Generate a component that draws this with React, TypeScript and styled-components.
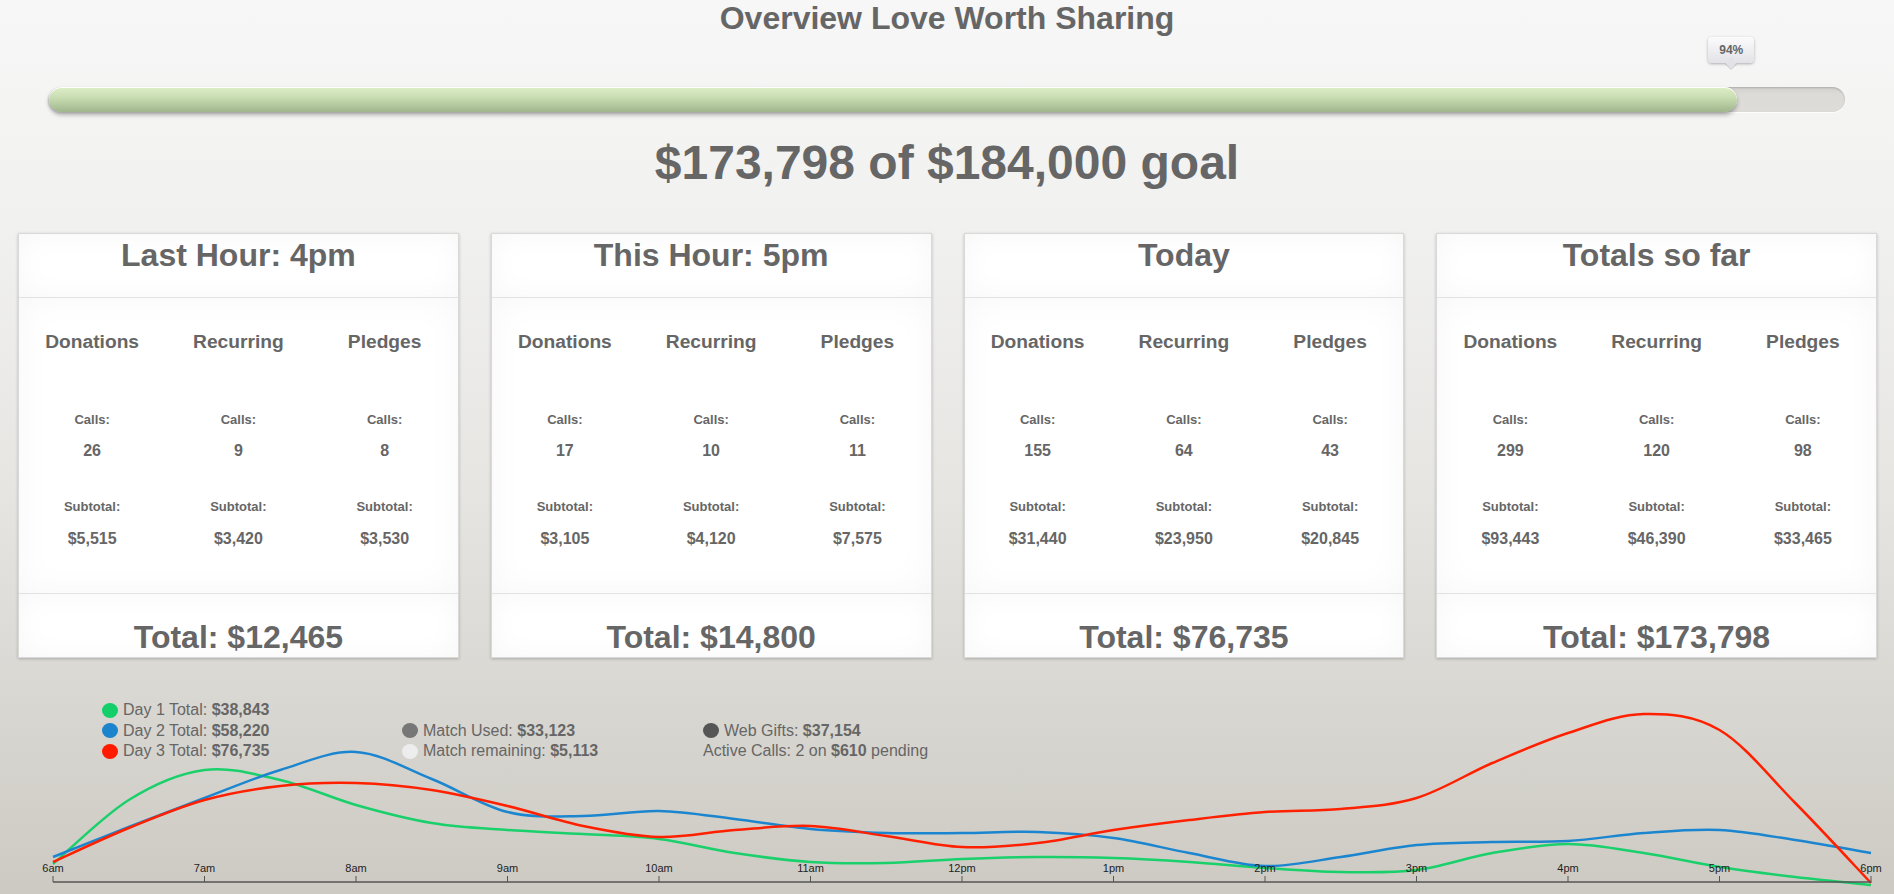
import React from 'react';
import styled, { createGlobalStyle } from 'styled-components';

const GlobalStyle = createGlobalStyle`
  html, body { margin: 0; padding: 0; overflow: hidden; }
  body {
    font-family: "Liberation Sans", Arial, Helvetica, sans-serif;
    color: #666;
  }
  * { box-sizing: border-box; }
`;

const Page = styled.div`
  width: 100%;
  height: 894px;
  display: flex;
  flex-direction: column;
  background: linear-gradient(180deg, #f7f7f7 0%, #f1f1f0 25%, #e6e5e2 55%, #dbd9d4 75%, #cdcac3 100%);
  overflow: hidden;
`;

const Title = styled.h1`
  margin: 0;
  font-size: 32px;
  line-height: 36px;
  font-weight: bold;
  text-align: center;
  color: #666;
`;

const ProgressArea = styled.div`
  padding: 51px 49px 0;
`;

const Track = styled.div`
  position: relative;
  height: 25px;
  border-radius: 13px;
  background: linear-gradient(180deg, #d2d1cd 0%, #dcdbd7 30%, #dddcd8 100%);
  box-shadow: inset 0 1px 2px rgba(0, 0, 0, 0.18), 0 1px 0 rgba(255, 255, 255, 0.9);
`;

const Fill = styled.div`
  height: 100%;
  border-radius: 13px;
  background: linear-gradient(180deg, #deefc8 0%, #c7dbb0 45%, #9fb68c 100%);
  box-shadow: inset 0 1px 0 rgba(255, 255, 255, 0.95), 0 3px 4px rgba(0, 0, 0, 0.28), -1px 1px 2px rgba(0, 0, 0, 0.15);
`;

const Bubble = styled.div`
  position: absolute;
  top: -50px;
  width: 46px;
  height: 26px;
  margin-left: -29px;
  border-radius: 4px;
  background: linear-gradient(180deg, #fbfbfc 0%, #e2e2e7 100%);
  box-shadow: 0 1px 3px rgba(0, 0, 0, 0.3);
  font-size: 12px;
  font-weight: bold;
  color: #666;
  display: flex;
  align-items: center;
  justify-content: center;

  &::after {
    content: "";
    position: absolute;
    left: 50%;
    bottom: -4px;
    width: 8px;
    height: 8px;
    margin-left: -4px;
    background: #e2e2e7;
    transform: rotate(45deg);
    box-shadow: 1px 1px 1px rgba(0, 0, 0, 0.15);
  }
`;

const Goal = styled.div`
  margin-top: 24px;
  font-size: 48px;
  line-height: 54px;
  font-weight: bold;
  text-align: center;
  color: #666;
`;

const Cards = styled.div`
  margin-top: 43px;
  padding: 0 17px 0 18px;
  display: grid;
  grid-template-columns: repeat(4, 1fr);
  gap: 32px;
`;

const Card = styled.section`
  background: #fff;
  border: 1px solid #d9d9d9;
  box-shadow: 0 1px 3px rgba(0, 0, 0, 0.22);
  overflow: hidden;
`;

const CardHead = styled.header`
  padding: 2px 0 23px;
  border-bottom: 1px solid #e2e2e2;
  box-shadow: inset 0 0 30px rgba(0, 0, 0, 0.035);
`;

const CardTitle = styled.h2`
  margin: 0;
  font-size: 32px;
  line-height: 38px;
  font-weight: bold;
  text-align: center;
  color: #666;
`;

const CardBody = styled.div`
  padding: 33px 0 44px;
  display: grid;
  grid-template-columns: repeat(3, 1fr);
  box-shadow: inset 0 0 36px rgba(0, 0, 0, 0.035);
`;

const Column = styled.div`
  display: flex;
  flex-direction: column;
  align-items: center;
  text-align: center;
`;

const ColHeading = styled.div`
  font-size: 19.2px;
  line-height: 22px;
  font-weight: bold;
  margin-bottom: 59px;
`;

const Label = styled.div<{ $gap?: number }>`
  font-size: 13px;
  line-height: 16px;
  font-weight: bold;
  margin-top: ${(p) => p.$gap ?? 0}px;
`;

const Value = styled.div<{ $gap: number }>`
  font-size: 16px;
  line-height: 20px;
  font-weight: bold;
  margin-top: ${(p) => p.$gap}px;
`;

const CardFoot = styled.footer`
  padding: 24px 0 1px;
  border-top: 1px solid #e2e2e2;
  box-shadow: inset 0 0 30px rgba(0, 0, 0, 0.035);
`;

const ChartArea = styled.div`
  position: relative;
  flex: 1;
`;

const ChartSvg = styled.svg`
  display: block;
  width: 100%;
  height: 100%;
`;

const Legend = styled.div`
  position: absolute;
  left: 102px;
  top: 42px;
  display: grid;
  grid-template-columns: 300px 301px auto;
  grid-auto-rows: 20.6px;
  font-size: 16px;
  color: #666;
`;

const LegendItem = styled.div<{ $col: number; $row: number }>`
  grid-column: ${(p) => p.$col};
  grid-row: ${(p) => p.$row};
  display: flex;
  align-items: center;
  gap: 5px;
  white-space: nowrap;
`;

const Dot = styled.span<{ $color: string }>`
  width: 16px;
  height: 15px;
  border-radius: 50%;
  background: ${(p) => p.$color};
  flex: none;
`;

const B = styled.b`
  font-weight: bold;
`;

type Stat = { title: string; calls: number[]; subs: string[]; total: string };

const cards: Stat[] = [
  { title: 'Last Hour: 4pm', calls: [26, 9, 8], subs: ['$5,515', '$3,420', '$3,530'], total: '$12,465' },
  { title: 'This Hour: 5pm', calls: [17, 10, 11], subs: ['$3,105', '$4,120', '$7,575'], total: '$14,800' },
  { title: 'Today', calls: [155, 64, 43], subs: ['$31,440', '$23,950', '$20,845'], total: '$76,735' },
  { title: 'Totals so far', calls: [299, 120, 98], subs: ['$93,443', '$46,390', '$33,465'], total: '$173,798' },
];

const kinds = ['Donations', 'Recurring', 'Pledges'];

const CHART_TOP = 658;
const X0 = 53;
const STEP = 151.5;
const AXIS_Y = 882 - CHART_TOP;
const hours = ['6am', '7am', '8am', '9am', '10am', '11am', '12pm', '1pm', '2pm', '3pm', '4pm', '5pm', '6pm'];

const green = [864, 800, 770, 780, 805, 823, 830, 834, 839, 853, 862, 863, 859, 857, 858, 862, 868, 872, 870, 853, 844, 853, 867, 877, 885];
const blue = [857, 827, 798, 770, 752, 779, 812, 816, 811, 819, 829, 833, 833, 832, 838, 853, 866, 857, 845, 842, 841, 833, 830, 840, 853];
const red = [862, 828, 800, 786, 783, 790, 806, 826, 837, 830, 826, 836, 847, 843, 830, 820, 812, 809, 798, 763, 733, 714, 730, 803, 883];

function toPath(vals: number[]): string {
  const pts = vals.map((v, i) => [X0 + (i * STEP) / 2, v - CHART_TOP]);
  let d = `M${pts[0][0]},${pts[0][1]}`;
  for (let i = 0; i < pts.length - 1; i++) {
    const p0 = pts[i - 1] || pts[i];
    const p1 = pts[i];
    const p2 = pts[i + 1];
    const p3 = pts[i + 2] || pts[i + 1];
    const c1x = p1[0] + (p2[0] - p0[0]) / 6;
    const c1y = p1[1] + (p2[1] - p0[1]) / 6;
    const c2x = p2[0] - (p3[0] - p1[0]) / 6;
    const c2y = p2[1] - (p3[1] - p1[1]) / 6;
    d += ` C${c1x.toFixed(1)},${c1y.toFixed(1)} ${c2x.toFixed(1)},${c2y.toFixed(1)} ${p2[0]},${p2[1]}`;
  }
  return d;
}

const raised = 173798;
const goal = 184000;

export default function App() {
  const pct = Math.round((raised / goal) * 100);
  return (
    <Page>
      <GlobalStyle />
      <Title>Overview Love Worth Sharing</Title>
      <ProgressArea>
        <Track>
          <Fill style={{ width: `${pct}%` }} />
          <Bubble style={{ left: `${pct}%` }}>{pct}%</Bubble>
        </Track>
      </ProgressArea>
      <Goal>$173,798 of $184,000 goal</Goal>
      <Cards>
        {cards.map((c) => (
          <Card key={c.title}>
            <CardHead>
              <CardTitle>{c.title}</CardTitle>
            </CardHead>
            <CardBody>
              {kinds.map((k, i) => (
                <Column key={k}>
                  <ColHeading>{k}</ColHeading>
                  <Label>Calls:</Label>
                  <Value $gap={13}>{c.calls[i]}</Value>
                  <Label $gap={38}>Subtotal:</Label>
                  <Value $gap={14}>{c.subs[i]}</Value>
                </Column>
              ))}
            </CardBody>
            <CardFoot>
              <CardTitle>Total: {c.total}</CardTitle>
            </CardFoot>
          </Card>
        ))}
      </Cards>
      <ChartArea>
        <ChartSvg viewBox="0 0 1894 236" preserveAspectRatio="none">
          <path d={toPath(green)} fill="none" stroke="#19d06b" strokeWidth={2.5} />
          <path d={toPath(blue)} fill="none" stroke="#1b86cf" strokeWidth={2.5} />
          <path d={toPath(red)} fill="none" stroke="#ff2000" strokeWidth={2.5} />
          <line x1={X0} y1={AXIS_Y} x2={X0 + STEP * 12} y2={AXIS_Y} stroke="#555" strokeWidth={1.5} />
          {hours.map((h, i) => {
            const x = X0 + i * STEP;
            return (
              <g key={h}>
                <line x1={x} y1={AXIS_Y - 6} x2={x} y2={AXIS_Y} stroke="#555" strokeWidth={1} />
                <text
                  x={x}
                  y={AXIS_Y - 10}
                  textAnchor="middle"
                  fontSize={11}
                  fill="#222"
                  fontFamily='"Liberation Sans", Arial, sans-serif'
                >
                  {h}
                </text>
              </g>
            );
          })}
        </ChartSvg>
        <Legend>
          <LegendItem $col={1} $row={1}>
            <Dot $color="#13cf6a" />
            <span>Day 1 Total: <B>$38,843</B></span>
          </LegendItem>
          <LegendItem $col={1} $row={2}>
            <Dot $color="#1b84cc" />
            <span>Day 2 Total: <B>$58,220</B></span>
          </LegendItem>
          <LegendItem $col={1} $row={3}>
            <Dot $color="#ff1a00" />
            <span>Day 3 Total: <B>$76,735</B></span>
          </LegendItem>
          <LegendItem $col={2} $row={2}>
            <Dot $color="#777" />
            <span>Match Used: <B>$33,123</B></span>
          </LegendItem>
          <LegendItem $col={2} $row={3}>
            <Dot $color="#ededed" />
            <span>Match remaining: <B>$5,113</B></span>
          </LegendItem>
          <LegendItem $col={3} $row={2}>
            <Dot $color="#555" />
            <span>Web Gifts: <B>$37,154</B></span>
          </LegendItem>
          <LegendItem $col={3} $row={3}>
            <span>Active Calls: 2 on <B>$610</B> pending</span>
          </LegendItem>
        </Legend>
      </ChartArea>
    </Page>
  );
}
